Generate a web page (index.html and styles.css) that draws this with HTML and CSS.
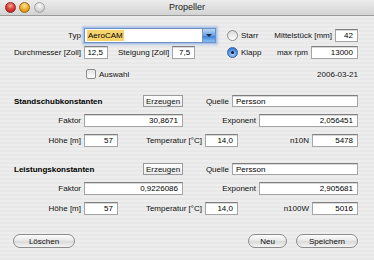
FILE: index.html
```html
<!DOCTYPE html>
<html lang="de">
<head>
  <meta charset="UTF-8" />
  <title>Propeller</title>
  <meta name="viewport" content="width=device-width, initial-scale=1.0" />
  <link rel="stylesheet" href="styles.css">
</head>
<body>
  <div class="window">
    <div class="titlebar">
      <div class="lights">
        <span class="light red"></span>
        <span class="light yellow"></span>
        <span class="light gray"></span>
      </div>
      <div class="title">Propeller</div>
    </div>

    <div class="content">
      <div class="row row-a">
        <div class="left">
          <span class="lbl w81">Typ</span>
          <div class="combo">
            <span class="combo-text"><span class="sel">AeroCAM</span></span>
            <span class="combo-btn"></span>
          </div>
        </div>
        <label class="radio"><span class="dot"></span>Starr</label>
        <div class="right">
          <span class="lbl">Mittelstück [mm]</span>
          <span class="field w23">42</span>
        </div>
      </div>

      <div class="row row-b">
        <div class="left">
          <span class="lbl w81">Durchmesser [Zoll]</span>
          <span class="field w24">12,5</span>
          <span class="lbl steigung">Steigung [Zoll]</span>
          <span class="field w23">7,5</span>
        </div>
        <label class="radio on"><span class="dot"></span>Klapp</label>
        <div class="right">
          <span class="lbl">max rpm</span>
          <span class="field w47">13000</span>
        </div>
      </div>

      <div class="row row-c">
        <label class="check"><span class="box"></span>Auswahl</label>
        <div class="right date">2006-03-21</div>
      </div>

      <div class="row head">
        <span class="section">Standschubkonstanten</span>
        <button class="small-btn">Erzeugen</button>
        <div class="right">
          <span class="lbl">Quelle</span>
          <span class="field text w126">Persson</span>
        </div>
      </div>
      <div class="row line">
        <span class="lbl w81">Faktor</span>
        <span class="field w99">30,8671</span>
        <div class="right">
          <span class="lbl">Exponent</span>
          <span class="field w99">2,056451</span>
        </div>
      </div>
      <div class="row line">
        <span class="lbl w81">Höhe [m]</span>
        <span class="field w34">57</span>
        <span class="lbl w87">Temperatur [°C]</span>
        <span class="field w33">14,0</span>
        <div class="right">
          <span class="lbl">n10N</span>
          <span class="field w46">5478</span>
        </div>
      </div>

      <div class="row head second">
        <span class="section">Leistungskonstanten</span>
        <button class="small-btn">Erzeugen</button>
        <div class="right">
          <span class="lbl">Quelle</span>
          <span class="field text w126">Persson</span>
        </div>
      </div>
      <div class="row line">
        <span class="lbl w81">Faktor</span>
        <span class="field w99">0,9226086</span>
        <div class="right">
          <span class="lbl">Exponent</span>
          <span class="field w99">2,905681</span>
        </div>
      </div>
      <div class="row line">
        <span class="lbl w81">Höhe [m]</span>
        <span class="field w34">57</span>
        <span class="lbl w87">Temperatur [°C]</span>
        <span class="field w33">14,0</span>
        <div class="right">
          <span class="lbl">n100W</span>
          <span class="field w46">5016</span>
        </div>
      </div>

      <div class="row buttons">
        <button class="pill w62">Löschen</button>
        <div class="right">
          <button class="pill w39">Neu</button>
          <button class="pill w62">Speichern</button>
        </div>
      </div>
    </div>
  </div>
</body>
</html>
```

FILE: styles.css
```css
body {
  margin: 0;
  padding: 0;
  font-family: 'Liberation Sans', Arial, sans-serif;
  font-size: 8px;
  color: #000;
  background: #ececec;
}

.window {
  width: 374px;
  height: 260px;
  overflow: hidden;
  background: repeating-linear-gradient(180deg, #ededed 0, #ededed 2px, #e8e8e8 2px, #e8e8e8 4px);
}

/* title bar */
.titlebar {
  height: 15px;
  position: relative;
  background: linear-gradient(#ececec, #d3d3d3);
  border-bottom: 1px solid #9b9b9b;
}

.lights {
  display: flex;
  gap: 3px;
  padding: 2px 0 0 5px;
}

.light {
  width: 11px;
  height: 11px;
  border-radius: 50%;
  box-sizing: border-box;
}

.light.red {
  background: radial-gradient(circle at 50% 30%, #f7a5a0 0, #e0443c 45%, #a8100d 100%);
  border: 1px solid #8e2a25;
}

.light.yellow {
  background: radial-gradient(circle at 50% 30%, #fde6a0 0, #f3b32c 45%, #c27808 100%);
  border: 1px solid #9c6a1a;
}

.light.gray {
  margin-left: 1px;
  background: radial-gradient(circle at 50% 30%, #fafafa 0, #dcdcdc 50%, #b5b5b5 100%);
  border: 1px solid #a3a3a3;
}

.title {
  position: absolute;
  left: 0;
  right: 0;
  top: 2px;
  text-align: center;
  font-size: 9px;
  color: #222;
}

/* form rows */
.content {
  padding-top: 12px;
}

.row {
  display: flex;
  align-items: center;
  padding-right: 16px;
}

.right {
  margin-left: auto;
  display: flex;
  align-items: center;
}

.left {
  display: flex;
  align-items: center;
  width: 227px;
  flex: none;
}

.row-a { height: 15px; }
.row-b { height: 13px; margin-top: 3px; }
.row-c { height: 10px; margin-top: 10px; }
.head { height: 12px; margin-top: 16px; }
.line { height: 13px; margin-top: 7px; }
.buttons { height: 14px; margin-top: 19px; padding-left: 13px; }

.lbl {
  flex: none;
  text-align: right;
  padding-right: 3px;
  box-sizing: border-box;
  white-space: nowrap;
  color: #111;
}

.w81 { width: 84px; }
.w87 { width: 87px; }
.steigung { margin-left: 10px; }

.field {
  flex: none;
  box-sizing: border-box;
  height: 13px;
  line-height: 12px;
  background: #fff;
  border: 1px solid #a5a5a5;
  border-top-color: #7f7f7f;
  box-shadow: inset 0 1px 0 #d8d8d8;
  text-align: right;
  padding-right: 4px;
}

.field.text {
  text-align: left;
  padding-left: 3px;
}

.line .field, .head .field { height: 13px; }
.head .field { height: 12px; line-height: 11px; }

.w23 { width: 23px; }
.w24 { width: 24px; }
.w33 { width: 33px; }
.w34 { width: 34px; }
.w46 { width: 46px; }
.w47 { width: 47px; }
.w99 { width: 99px; }
.w126 { width: 126px; }

/* combo */
.combo {
  display: flex;
  width: 132px;
  height: 15px;
  box-sizing: border-box;
  border: 1px solid #6e8fc2;
  box-shadow: 0 0 0 1px #a9c3ea, 0 0 2px 2px rgba(120, 160, 225, 0.45);
  background: #fff;
}

.combo-text {
  flex: 1;
  padding-left: 2px;
  line-height: 13px;
}

.sel {
  background: #f7d36c;
  padding: 1px 1px;
}

.combo-btn {
  width: 12px;
  position: relative;
  background: linear-gradient(#bcd7f7, #6aa2e6 50%, #3e80d8 55%, #8cc0f6);
  border-left: 1px solid #7c94b8;
}

.combo-btn::after {
  content: "";
  position: absolute;
  left: 3px;
  top: 5px;
  border-left: 3px solid transparent;
  border-right: 3px solid transparent;
  border-top: 3px solid #1d2a45;
}

/* radios and checkbox */
.radio {
  display: flex;
  align-items: center;
  gap: 3px;
  color: #111;
}

.dot {
  width: 11px;
  height: 11px;
  border-radius: 50%;
  box-sizing: border-box;
  border: 1px solid #8a8a8a;
  background: linear-gradient(#d9d9d9, #ffffff);
  position: relative;
}

.radio.on .dot {
  border-color: #3d5f9a;
  background: radial-gradient(circle at 50% 70%, #a9d3fb 0, #4b8de0 60%, #2a64c0 100%);
}

.radio.on .dot::after {
  content: "";
  position: absolute;
  left: 3px;
  top: 3px;
  width: 3px;
  height: 3px;
  border-radius: 50%;
  background: #0d1b33;
}

.check {
  display: flex;
  align-items: center;
  gap: 3px;
  margin-left: 86px;
  color: #111;
}

.box {
  width: 10px;
  height: 10px;
  box-sizing: border-box;
  border: 1px solid #8c8c8c;
  border-radius: 2px;
  background: linear-gradient(#e2e2e2, #ffffff);
}

.date { color: #111; }

/* sections */
.section {
  font-weight: bold;
  width: 129px;
  padding-left: 14px;
  flex: none;
}

.small-btn {
  font-family: inherit;
  font-size: 8px;
  width: 40px;
  height: 12px;
  padding: 0;
  border: 1px solid #9a9a9a;
  background: linear-gradient(#ffffff, #ececec);
  color: #111;
}

.pill {
  font-family: inherit;
  font-size: 8px;
  height: 14px;
  padding: 0;
  border: 1px solid #8c8c8c;
  border-radius: 7px;
  background: linear-gradient(#fdfdfd, #e6e6e6 50%, #dadada 55%, #f4f4f4);
  color: #111;
}

.pill + .pill { margin-left: 9px; }

.w39 { width: 39px; }
.w62 { width: 62px; }
```
